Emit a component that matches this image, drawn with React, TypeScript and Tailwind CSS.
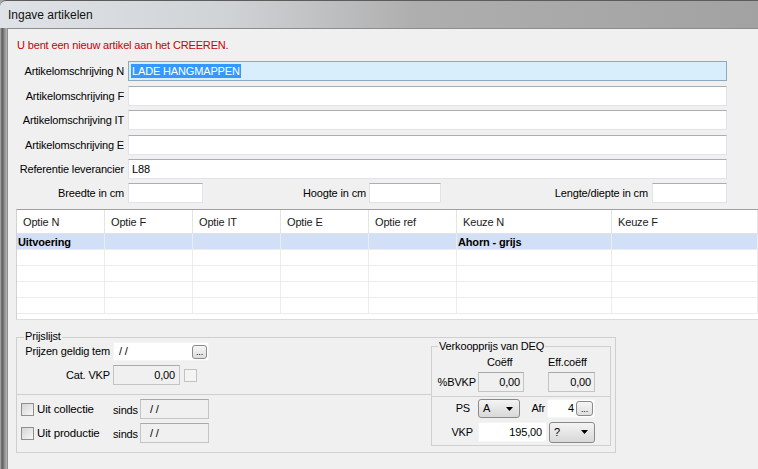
import type { ReactNode } from "react"

const textBox = "h-[20px] border border-[#e2e3ea] border-t-[#abadb3] bg-white"
const roBox = "border border-[#c4c4c4] border-t-[#a9a9a9] bg-[#f0f0f0]"

function Arrow() {
  return (
    <svg width="7" height="4" viewBox="0 0 7 4" className="shrink-0">
      <path d="M0 0h7L3.5 4z" fill="#000" />
    </svg>
  )
}

function Dots({ className }: { className: string }) {
  return (
    <div
      className={`flex items-end justify-center rounded-[3px] border border-[#8a8a8a] bg-[linear-gradient(#f6f6f6,#dedede)] text-[9px] leading-[9px] pb-[1px] ${className}`}
    >
      ...
    </div>
  )
}

function Combo({ value, className }: { value: string; className: string }) {
  return (
    <div
      className={`flex items-center justify-between rounded-[3px] border border-[#8a8a8a] bg-[linear-gradient(#f4f4f4,#e6e6e6_50%,#d8d8d8)] pl-[4px] pr-[6px] ${className}`}
    >
      <span>{value}</span>
      <Arrow />
    </div>
  )
}

function Check() {
  return (
    <div className="w-[13px] h-[13px] border border-[#8f8f8f] bg-[linear-gradient(135deg,#d4d4d4,#f8f8f8)] shrink-0" />
  )
}

function Row({ label, children, className = "" }: { label: string; children: ReactNode; className?: string }) {
  return (
    <div className={`flex items-center h-[20px] ${className}`}>
      <div className="w-[120px] pr-[4px] text-right">{label}</div>
      {children}
    </div>
  )
}

const columns = [
  { name: "Optie N", w: "w-[88px]" },
  { name: "Optie F", w: "w-[88px]" },
  { name: "Optie IT", w: "w-[88px]" },
  { name: "Optie E", w: "w-[88px]" },
  { name: "Optie ref", w: "w-[88px]" },
  { name: "Keuze N", w: "w-[155px]" },
  { name: "Keuze F", w: "flex-1" },
]

const rows = [
  ["Uitvoering", "", "", "", "", "Ahorn - grijs", ""],
  ["", "", "", "", "", "", ""],
  ["", "", "", "", "", "", ""],
  ["", "", "", "", "", "", ""],
  ["", "", "", "", "", "", ""],
]

export default function App() {
  return (
    <div className="w-[758px] h-[469px] overflow-hidden flex flex-col font-['Liberation_Sans',Arial,sans-serif] text-[11px] tracking-[-0.15px] text-black bg-[#a9a9a9]">
      <div className="h-[28px] shrink-0 flex items-center pl-[8px] border-t border-[#5c5c5c] rounded-tl-[6px] bg-[linear-gradient(to_right,#dfe3e7_0%,#d0d3d6_30%,#aeaeae_55%,#a2a2a2_100%)] text-[12px] tracking-normal text-[#111]">
        Ingave artikelen
      </div>

      <div className="flex flex-1 min-h-0">
        <div className="w-[7px] shrink-0 bg-[linear-gradient(to_right,#b4b4b4,#5a5a5a_30%,#888888_60%,#b8b8b8)]" />

        <main className="flex-1 flex flex-col border-l border-t border-[#8e8e8e] bg-[#f0f0f0]">
          <div className="mt-[9px] h-[14px] leading-[14px] pl-[9px] text-[#c80000]">
            U bent een nieuw artikel aan het CREEREN.
          </div>

          <Row label="Artikelomschrijving N" className="mt-[9px]">
            <div className="w-[599px] h-[20px] flex items-center pl-[2px] border border-[#8ea8bf] bg-[#d9eefc]">
              <span className="bg-[#3399ff] text-white px-[1px] leading-[14px]">LADE HANGMAPPEN</span>
            </div>
          </Row>
          <Row label="Artikelomschrijving F" className="mt-[5px]">
            <div className={`w-[599px] ${textBox}`} />
          </Row>
          <Row label="Artikelomschrijving IT" className="mt-[4px]">
            <div className={`w-[599px] ${textBox}`} />
          </Row>
          <Row label="Artikelomschrijving E" className="mt-[5px]">
            <div className={`w-[599px] ${textBox}`} />
          </Row>
          <Row label="Referentie leverancier" className="mt-[4px]">
            <div className={`w-[599px] ${textBox} flex items-center pl-[3px]`}>L88</div>
          </Row>
          <Row label="Breedte in cm" className="mt-[4px]">
            <div className={`w-[75px] ${textBox}`} />
            <div className="w-[166px] pr-[3px] text-right">Hoogte in cm</div>
            <div className={`w-[72px] ${textBox}`} />
            <div className="w-[211px] pr-[4px] text-right">Lengte/diepte in cm</div>
            <div className={`w-[75px] ${textBox}`} />
          </Row>

          {/* options grid */}
          <div className="mt-[6px] ml-[8px] h-[111px] flex flex-col border-t border-l border-b border-t-[#a0a0a0] border-l-[#d2d2d2] border-b-[#dcdcdc] bg-white">
            <div className="flex h-[24px] border-b border-[#e2e2e2]">
              {columns.map((c) => (
                <div key={c.name} className={`${c.w} flex items-center pt-[2px] pl-[6px] border-r border-[#e4e4e4] text-[#1a1a1a]`}>
                  {c.name}
                </div>
              ))}
            </div>
            {rows.map((r, i) => (
              <div key={i} className={`flex h-[16px] border-b border-[#ececec] ${i === 0 ? "bg-[#d2e0f7] font-bold" : ""}`}>
                {r.map((v, j) => (
                  <div key={j} className={`${columns[j].w} flex items-center pl-[1px] border-r border-[#ececec] leading-[14px]`}>
                    {v}
                  </div>
                ))}
              </div>
            ))}
          </div>

          {/* price panel */}
          <div className="mt-[17px] ml-[8px] w-[600px] h-[116px] flex border border-[#cfcfcf]">
            <div className="w-[414px] flex flex-col">
              <div className="h-[57px] border-b border-[#cfcfcf] flex flex-col">
                <div className="-mt-[8px] mb-[-1px] ml-[7px] w-fit px-[1px] bg-[#f0f0f0] leading-[13px]">Prijslijst</div>
                <div className="flex items-center h-[19px]">
                  <div className="w-[96px] pr-[3px] text-right">Prijzen geldig tem</div>
                  <div className="w-[96px] h-[19px] flex items-center justify-between pl-[5px] pr-[1px] bg-white border border-[#f4f4f4]">
                    <span>/ /</span>
                    <Dots className="w-[15px] h-[14px]" />
                  </div>
                </div>
                <div className="flex items-center h-[20px] mt-[4px]">
                  <div className="w-[96px] pr-[3px] text-right">Cat. VKP</div>
                  <div className={`w-[67px] h-[20px] flex items-center justify-end pr-[4px] ${roBox}`}>0,00</div>
                  <div className="ml-[4px] w-[13px] h-[13px] border border-[#c2c2c2] bg-[#f4f4f4]" />
                </div>
              </div>
              <div className="flex flex-col">
                <div className="flex items-center h-[20px] mt-[4px] pl-[4px]">
                  <Check />
                  <div className="w-[79px] pl-[3px] text-[11.5px] leading-[14px]">Uit collectie</div>
                  <div className="w-[27px] pt-[3px]">sinds</div>
                  <div className={`w-[69px] h-[20px] flex items-center pl-[9px] ${roBox}`}>/ /</div>
                </div>
                <div className="flex items-center h-[20px] mt-[4px] pl-[4px]">
                  <Check />
                  <div className="w-[79px] pl-[3px] text-[11.5px] leading-[14px]">Uit productie</div>
                  <div className="w-[27px] pt-[3px]">sinds</div>
                  <div className={`w-[69px] h-[20px] flex items-center pl-[9px] ${roBox}`}>/ /</div>
                </div>
              </div>
            </div>

            <div className="flex-1">
              <div className="mt-[8px] w-[180px] h-[100px] border border-[#cfcfcf] flex flex-col">
                <div className="h-[50px] border-b border-[#cfcfcf] flex flex-col">
                  <div className="-mt-[7px] ml-[6px] w-fit px-[1px] bg-[#f0f0f0] leading-[13px]">Verkoopprijs van DEQ</div>
                  <div className="flex h-[13px] mt-[3px] leading-[13px] pl-[55px]">
                    <div className="w-[61px]">Coëff</div>
                    <div>Eff.coëff</div>
                  </div>
                  <div className="flex items-center h-[20px] mt-[3px]">
                    <div className="w-[46px] pr-[2px] text-right">%BVKP</div>
                    <div className={`w-[46px] h-[20px] flex items-center justify-end pr-[3px] ${roBox}`}>0,00</div>
                    <div className={`ml-[24px] w-[47px] h-[20px] flex items-center justify-end pr-[3px] ${roBox}`}>0,00</div>
                  </div>
                </div>
                <div className="flex items-center h-[19px] mt-[2px]">
                  <div className="w-[46px] pr-[8px] text-right">PS</div>
                  <Combo value="A" className="w-[42px] h-[19px]" />
                  <div className="w-[27px] pr-[2px] text-right">Afr</div>
                  <div className="w-[48px] h-[19px] flex items-center justify-end gap-[2px] pr-[1px] bg-white border border-[#f4f4f4]">
                    <span>4</span>
                    <Dots className="w-[17px] h-[15px]" />
                  </div>
                </div>
                <div className="flex items-center h-[20px] mt-[4px]">
                  <div className="w-[46px] pr-[5px] text-right">VKP</div>
                  <div className="w-[69px] h-[20px] flex items-center justify-end pr-[4px] bg-white border border-[#f4f4f4]">195,00</div>
                  <Combo value="?" className="ml-[2px] w-[46px] h-[21px]" />
                </div>
              </div>
            </div>
          </div>
        </main>
      </div>
    </div>
  )
}
